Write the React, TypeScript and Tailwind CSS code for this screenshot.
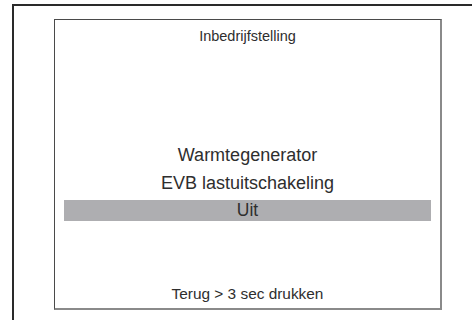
export default function App() {
  return (
    <div
      className="w-[472px] h-[320px] bg-white overflow-hidden pl-[12px] pt-[4px] text-[#2e2e2e]"
      style={{ fontFamily: '"Liberation Sans", Arial, Helvetica, sans-serif' }}
    >
      <div className="h-[330px] border-l-2 border-t-2 border-[#2a2a2a] pl-[40px] pt-[13px]">
        <div className="w-[388px] h-[291px] border-l border-t border-[#4a4a4a] border-r-2 border-b-2 border-r-[#8a8a8a] border-b-[#8a8a8a] flex flex-col">
          <div className="mt-[6px] h-[20px] leading-[20px] text-[14.5px] text-center">Inbedrijfstelling</div>
          <div className="mt-[95px] h-[28px] leading-[28px] text-[18px] text-center">Warmtegenerator</div>
          <div className="h-[28px] leading-[28px] text-[18px] text-center">EVB lastuitschakeling</div>
          <div className="mt-[3px] mx-[9px] h-[21px] leading-[21px] text-[17.5px] text-center bg-[#aeaeb1]">Uit</div>
          <div className="mt-auto pb-[4px] h-[24px] leading-[20px] text-[15.4px] text-center">Terug &gt; 3 sec drukken</div>
        </div>
      </div>
    </div>
  );
}
